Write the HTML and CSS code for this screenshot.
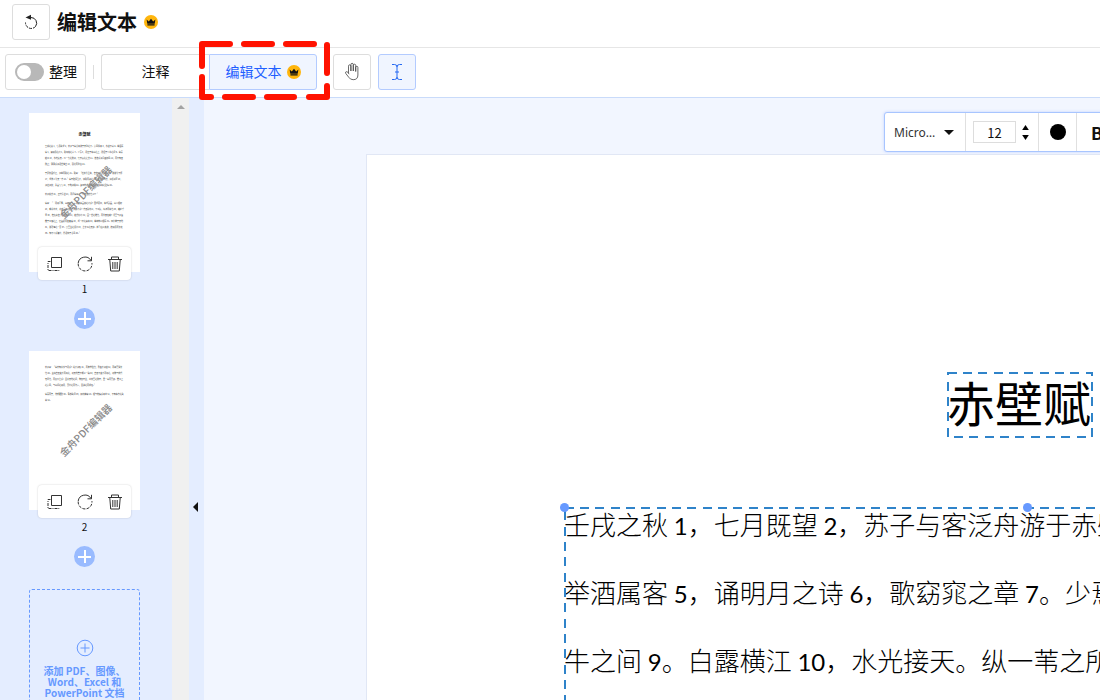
FILE: index.html
```html
<!DOCTYPE html>
<html lang="zh-CN">

<head>
    <meta charset="UTF-8">
    <meta name="viewport" content="width=device-width, initial-scale=1.0">
    <title>编辑文本</title>
    <link rel="stylesheet" href="styles.css">
</head>

<body>
    <!-- shared icons -->
    <svg class="sprite" aria-hidden="true">
        <symbol id="crown" viewBox="0 0 14 14">
            <circle cx="7" cy="7" r="7" fill="#ffb60d" />
            <path d="M2.6 4.5l2.2 2L7 3.7l2.2 2.8 2.2-2-.7 4.3H3.3zM3.4 9.3h7.2v1.3H3.4z" fill="#111" />
        </symbol>
        <symbol id="copy" viewBox="0 0 16 16">
            <path d="M4.5 1.5h10v10h-10z" fill="none" stroke="#333" />
            <path d="M3.500 5.500h-2.500v9h11V13" fill="none" stroke="#333" stroke-dasharray="3 1 1 1" />
        </symbol>
        <symbol id="rotate" viewBox="0 0 16 16">
            <path d="M14 4.500A6.900 6.900 0 0 0 1.200 7" fill="none" stroke="#333" />
            <path d="M1.200 7.500A6.900 6.900 0 1 0 14.900 7" fill="none" stroke="#333" stroke-dasharray="3 1.300" />
            <path d="M14.500 .8v4h-4" fill="none" stroke="#333" />
        </symbol>
        <symbol id="trash" viewBox="0 0 16 16">
            <path d="M1 3.500h14M4.500 3.500v-2.500h7v2.500M2.800 4l.9 11h8.600L13.200 4M5.800 6v7M8 6v7M10.200 6v7" fill="none" stroke="#333" />
        </symbol>
    </svg>

    <header class="header">
        <button class="icon-button" aria-label="返回">
            <svg width="16" height="16" viewBox="0 0 16 16">
                <path d="M5.500 3.500H8a5.600 5.600 0 0 1 4.500 9" fill="none" stroke="#222" />
                <path d="M12.500 12.500A5.700 5.700 0 0 1 2.500 8.500" fill="none" stroke="#222" stroke-dasharray="3 1" />
                <path d="M2.500 3.500L8 .8v5z" fill="#222" />
            </svg>
        </button>
        <h1>编辑文本</h1>
        <svg class="crown"><use href="#crown" /></svg>
    </header>

    <nav class="toolbar">
        <label class="arrange">
            <input type="checkbox" class="toggle">
            <span class="label">整理</span>
        </label>
        <span class="divider"></span>
        <div class="modes">
            <button class="mode"><span class="label">注释</span></button>
            <button class="mode active"><span class="label">编辑文本</span> <svg class="crown"><use href="#crown" /></svg></button>
            <svg class="highlight" viewBox="0 0 131 60" aria-hidden="true">
                <path d="M3 26V4h28M45 4h28M87 4h28M3 37v20h9M26 57h28M68 57h27M110 57h18V46M128 5v28" />
            </svg>
        </div>
        <button class="icon-button" aria-label="移动">
            <svg width="18" height="20" viewBox="0 0 18 20">
                <path d="M5.500 11V4.200q0-1.400 1.200-1.400t1.200 1.400V9V2.700q0-1.400 1.200-1.400t1.200 1.400V9V3.500q0-1.300 1.200-1.300t1.200 1.300V9.500V5.500q0-1.200 1.100-1.200t1.100 1.200V13q0 4.700-4.700 4.700-3 0-4.500-2.500L2.800 11.500q-.8-1.500.3-1.800t2 1l1 1.500" fill="none" stroke="#444" stroke-width=".8" />
            </svg>
        </button>
        <button class="icon-button active" aria-label="选择文本">
            <svg width="12" height="18" viewBox="0 0 12 18">
                <path d="M1 1.500h2.500q2.500 0 2.500 2.500 0-2.500 2.500-2.500H11M6 4v10M1 16.500h2.500q2.500 0 2.500-2.500 0 2.500 2.500 2.500H11M4 9h4" fill="none" stroke="#2468f2" />
            </svg>
        </button>
    </nav>

    <main class="main">
        <aside class="sidebar">
            <div class="page-list">
                <div class="page-item">
                    <div class="thumb">
                        <h2>赤壁赋</h2>
                        <p>壬戌之秋 1，七月既望 2，苏子与客泛舟游于赤壁之下。清风徐来 3，水波不兴 4。举酒属客 5，诵明月之诗 6，歌窈窕之章 7。少焉 8，月出于东山之上，徘徊于斗牛之间 9。白露横江 10，水光接天。纵一苇之所如，凌万顷之茫然 11。浩浩乎如冯虚御风 12，而不知其所止；飘飘乎如遗世独立 13，羽化而登仙 14。</p>
                        <p>于是饮酒乐甚，扣舷而歌之 15。歌曰：“桂棹兮兰桨，击空明兮溯流光 16。渺渺兮予怀 17，望美人兮天一方 18。”客有吹洞箫者，倚歌而和之 19。其声呜呜然，如怨如慕 20，如泣如诉；余音袅袅 21，不绝如缕 22。舞幽壑之潜蛟 23，泣孤舟之嫠妇 24。</p>
                        <p>苏子愀然 25，正襟危坐 26，而问客曰：“何为其然也 27？”</p>
                        <p>客曰：“‘月明星稀，乌鹊南飞。’此非曹孟德之诗乎？西望夏口，东望武昌，山川相缪 28，郁乎苍苍，此非孟德之困于周郎者乎？方其破荆州，下江陵，顺流而东也 29，舳舻千里 30，旌旗蔽空，酾酒临江 31，横槊赋诗 32，固一世之雄也，而今安在哉？况吾与子渔樵于江渚之上，侣鱼虾而友麋鹿 33，驾一叶之扁舟 34，举匏樽以相属 35。寄蜉蝣于天地 36，渺沧海之一粟 37。哀吾生之须臾 38，羡长江之无穷。挟飞仙以遨游，抱明月而长终 39。知不可乎骤得，托遗响于悲风 40。”</p>
                        <span class="watermark">金舟PDF编辑器</span>
                    </div>
                    <div class="page-actions">
                        <button aria-label="复制"><svg><use href="#copy" /></svg></button>
                        <button aria-label="旋转"><svg><use href="#rotate" /></svg></button>
                        <button aria-label="删除"><svg><use href="#trash" /></svg></button>
                    </div>
                    <span class="page-number">1</span>
                    <button class="add-page" aria-label="添加页面"></button>
                </div>

                <div class="page-item">
                    <div class="thumb">
                        <p>苏子曰：“客亦知夫水与月乎？逝者如斯 41，而未尝往也；盈虚者如彼 42，而卒莫消长也 43。盖将自其变者而观之，则天地曾不能以一瞬 44；自其不变者而观之，则物与我皆无尽也，而又何羡乎！且夫天地之间，物各有主，苟非吾之所有，虽一毫而莫取。惟江上之清风，与山间之明月，耳得之而为声，目遇之而成色。”</p>
                        <p>客喜而笑，洗盏更酌 48。肴核既尽 49，杯盘狼籍 50。相与枕藉乎舟中 51，不知东方之既白 52。</p>
                        <span class="watermark">金舟PDF编辑器</span>
                    </div>
                    <div class="page-actions">
                        <button aria-label="复制"><svg><use href="#copy" /></svg></button>
                        <button aria-label="旋转"><svg><use href="#rotate" /></svg></button>
                        <button aria-label="删除"><svg><use href="#trash" /></svg></button>
                    </div>
                    <span class="page-number">2</span>
                    <button class="add-page" aria-label="添加页面"></button>
                </div>

                <button class="add-file">
                    <svg width="18" height="18" viewBox="0 0 18 18">
                        <path d="M9 4.500v9M4.500 9h9" stroke="#6699ff" />
                        <circle cx="9" cy="9" r="7.800" fill="none" stroke="#6699ff" />
                    </svg>
                    <span>添加 PDF、图像、<br>Word、Excel 和<br>PowerPoint 文档</span>
                </button>
            </div>
            <div class="scrollbar">
                <svg width="8" height="4" viewBox="0 0 8 4"><path d="M0 4l4-4 4 4z" fill="#a3a3a3" /></svg>
            </div>
            <button class="collapse" aria-label="收起">
                <svg width="5" height="10" viewBox="0 0 5 10"><path d="M5 0v10L0 5z" fill="#111" /></svg>
            </button>
        </aside>

        <section class="workspace">
            <div class="format-bar">
                <div class="cell font-cell">
                    <select aria-label="字体">
                        <option>Micro…</option>
                    </select>
                    <svg width="10" height="5" viewBox="0 0 10 5"><path d="M0 0h10L5 5z" fill="#111" /></svg>
                </div>
                <div class="cell size-cell">
                    <input type="text" value="12" aria-label="字号">
                    <div class="stepper">
                        <button aria-label="增大"><svg width="7" height="5" viewBox="0 0 8 6"><path d="M0 6l4-6 4 6z" /></svg></button>
                        <button aria-label="减小"><svg width="7" height="5" viewBox="0 0 8 6"><path d="M0 0h8L4 6z" /></svg></button>
                    </div>
                </div>
                <div class="cell color-cell">
                    <button class="color" aria-label="颜色"></button>
                </div>
                <div class="cell bold-cell">
                    <button class="bold">B</button>
                </div>
            </div>

            <article class="document">
                <h2 class="text-box doc-title">
                    <svg class="outline" aria-hidden="true"><rect x="1" y="1" /></svg>
                    赤壁赋
                </h2>
                <div class="text-box doc-body">
                    <svg class="outline" aria-hidden="true"><rect x="1" y="1" /></svg>
                    <span class="handle corner"></span>
                    <span class="handle middle"></span>
                    <p>壬戌之秋 <b>1</b>，七月既望 <b>2</b>，苏子与客泛舟游于赤壁之下。清风</p>
                    <p>举酒属客 <b>5</b>，诵明月之诗 <b>6</b>，歌窈窕之章 <b>7</b>。少焉 <b>8</b>，月出于东山</p>
                    <p>牛之间 <b>9</b>。白露横江 <b>10</b>，水光接天。纵一苇之所如，凌万顷</p>
                </div>
            </article>
        </section>
    </main>
</body>

</html>
```
FILE: styles.css
```css
* {
    margin: 0;
    padding: 0;
    box-sizing: border-box;
}

body {
    font-family: "Noto Sans CJK SC", sans-serif;
    font-size: 14px;
    color: #111;
    background-color: #fff;
    height: 100vh;
    display: flex;
    flex-direction: column;
    overflow: hidden;
}

button,
input,
select {
    font: inherit;
    color: inherit;
    border: none;
    background: none;
}

button {
    cursor: pointer;
}

svg {
    display: block;
    flex-shrink: 0;
}

.sprite {
    display: none;
}

.crown {
    width: 14px;
    height: 14px;
}

.header {
    display: flex;
    align-items: center;
    padding: 4px 12px 7px;
    gap: 7px;
    border-bottom: 1px solid #e6e6e6;
}

.header h1 {
    font-size: 20px;
    line-height: 36px;
}

.icon-button {
    width: 38px;
    height: 36px;
    border: 1px solid #ddd;
    border-radius: 3px;
    display: flex;
    align-items: center;
    justify-content: center;
}

.toolbar {
    display: flex;
    align-items: center;
    padding: 6px 5px 7px;
    border-bottom: 1px solid #c9dbfa;
}

.toolbar .label {
    padding-bottom: 3px;
}

.toolbar .active {
    color: #1f5fff;
    background-color: #f0f5ff;
    border-color: #b3cbff;
}

.arrange {
    display: flex;
    align-items: center;
    gap: 5px;
    height: 36px;
    padding: 0 8px 0 9px;
    border: 1px solid #ddd;
    border-radius: 3px;
}

.toggle {
    appearance: none;
    width: 29px;
    height: 18px;
    padding: 2px;
    border-radius: 9px;
    background-color: #b8b8b8;
}

.toggle::before {
    content: "";
    display: block;
    width: 14px;
    height: 14px;
    border-radius: 50%;
    background-color: #fff;
}

.toggle:checked::before {
    margin-left: auto;
}

.divider {
    width: 1px;
    height: 14px;
    margin: 0 7px;
    background-color: #ddd;
}

.modes {
    position: relative;
    display: flex;
    margin-right: 16px;
}

.mode {
    display: flex;
    align-items: center;
    justify-content: center;
    gap: 5px;
    width: 108px;
    height: 36px;
    border: 1px solid #ddd;
    border-right: none;
    border-radius: 3px 0 0 3px;
}

.mode.active {
    border-right: 1px solid #b3cbff;
    border-radius: 0 3px 3px 0;
}

.highlight {
    position: absolute;
    left: 98px;
    top: -14px;
    width: 131px;
    height: 60px;
    fill: none;
    stroke: #ff1200;
    stroke-width: 6px;
    stroke-linecap: round;
    stroke-linejoin: round;
    pointer-events: none;
}

.icon-button + .icon-button {
    margin-left: 7px;
}

.main {
    flex: 1;
    min-height: 0;
    display: flex;
}

.sidebar {
    flex-shrink: 0;
    display: flex;
    background-color: #e4edff;
}

.page-list {
    width: 172px;
    padding: 15px 32px 0 29px;
    overflow: hidden;
}

.page-item {
    display: flex;
    flex-direction: column;
    align-items: center;
    height: 238px;
}

.thumb {
    position: relative;
    flex-shrink: 0;
    width: 111px;
    height: 159px;
    padding: 14px 16px 0;
    background-color: #fff;
    overflow: hidden;
}

.thumb h2 {
    margin: 2px 0 5px;
    font-size: 4px;
    line-height: 10px;
    text-align: center;
}

.thumb p {
    margin-bottom: 3px;
    font-size: 2px;
    line-height: 6px;
    color: #333;
}

.watermark {
    position: absolute;
    left: 22px;
    top: 72px;
    font-size: 10px;
    font-weight: 500;
    line-height: 14px;
    color: #888;
    white-space: nowrap;
    transform: rotate(-45deg);
}

.page-actions {
    position: relative;
    display: flex;
    align-items: center;
    justify-content: center;
    gap: 14px;
    width: 93px;
    height: 33px;
    flex-shrink: 0;
    margin-top: -25px;
    background-color: #fff;
    border-radius: 4px;
    box-shadow: 0 0 2px rgba(0, 0, 0, 0.2);
}

.page-actions svg {
    width: 16px;
    height: 16px;
}

.page-number {
    font-size: 10px;
    line-height: 18px;
    margin-bottom: 10px;
}

.add-page {
    width: 21px;
    height: 21px;
    flex-shrink: 0;
    border-radius: 50%;
    background: linear-gradient(#fff, #fff) center / 13px 2px no-repeat,
        linear-gradient(#fff, #fff) center / 2px 13px no-repeat,
        #99bbff;
}

.add-file {
    display: flex;
    flex-direction: column;
    align-items: center;
    gap: 8px;
    width: 111px;
    height: 159px;
    padding-top: 49px;
    border: 1px dashed #6699ff;
    border-radius: 3px;
    font-size: 10px;
    line-height: 11px;
    font-weight: 700;
    color: #6699ff;
}

.scrollbar {
    width: 17px;
    padding: 7px 5px;
    background-color: #f0f0f0;
}

.collapse {
    display: flex;
    align-items: flex-start;
    width: 15px;
    padding: 404px 0 0 4px;
}

.workspace {
    flex: 1;
    min-width: 0;
    padding-top: 14px;
    background-color: #f2f6ff;
    overflow: hidden;
}

.format-bar {
    display: flex;
    height: 40px;
    width: 400px;
    margin-left: 680px;
    background-color: #fff;
    border: 1px solid #a8c5ff;
    border-radius: 3px;
    font-size: 13px;
    box-shadow: 0 0 3px rgba(80, 130, 255, 0.3);
}

.cell {
    display: flex;
    align-items: center;
    border-right: 1px solid #e0e0e0;
}

.bold-cell {
    border-right: none;
}

.font-cell {
    width: 81px;
    padding-left: 9px;
    gap: 5px;
    font-family: "Noto Sans", sans-serif;
    font-size: 12px;
    color: #333;
}

.font-cell select {
    appearance: none;
    width: 45px;
}

.size-cell {
    width: 73px;
    padding-left: 7px;
    gap: 6px;
}

.size-cell input {
    width: 43px;
    height: 22px;
    border: 1px solid #ddd;
    text-align: center;
}

.stepper {
    display: flex;
    flex-direction: column;
    gap: 5px;
}

.stepper button {
    display: block;
}

.color-cell {
    width: 38px;
    justify-content: center;
}

.color {
    width: 16px;
    height: 16px;
    border-radius: 50%;
    background-color: #000;
}

.bold {
    padding-left: 14px;
    font-size: 17px;
    font-weight: 700;
}

.document {
    width: 1308px;
    height: 1849px;
    margin: 2px 0 0 162px;
    padding: 217px 190px 0 197px;
    background-color: #fff;
    border: 1px solid #e1e7f5;
}

.text-box {
    position: relative;
    color: #000;
    white-space: nowrap;
}

.doc-title {
    width: 146px;
    margin: 0 auto 69px 383px;
    padding-bottom: 8px;
    font-size: 48px;
    font-weight: 400;
    line-height: 58px;
}

.doc-body {
    width: 926px;
    height: 1200px;
    font-size: 26px;
    font-weight: 300;
}

.doc-body p {
    line-height: 34px;
    margin-bottom: 34px;
}

.doc-body b {
    font-family: Lato, sans-serif;
    font-size: 24px;
    font-weight: 400;
    line-height: 1;
}

.outline {
    position: absolute;
    left: 0;
    top: 0;
    width: 100%;
    height: 100%;
}

.outline rect {
    width: calc(100% - 2px);
    height: calc(100% - 2px);
    fill: none;
    stroke: #2f83c9;
    stroke-width: 2px;
    stroke-dasharray: 9 6 9 6 9 7;
}

.handle {
    position: absolute;
    top: -4px;
    width: 9px;
    height: 9px;
    border-radius: 50%;
    background-color: #6699ff;
}

.handle.corner {
    left: -4px;
}

.handle.middle {
    left: calc(50% - 4px);
}
```
